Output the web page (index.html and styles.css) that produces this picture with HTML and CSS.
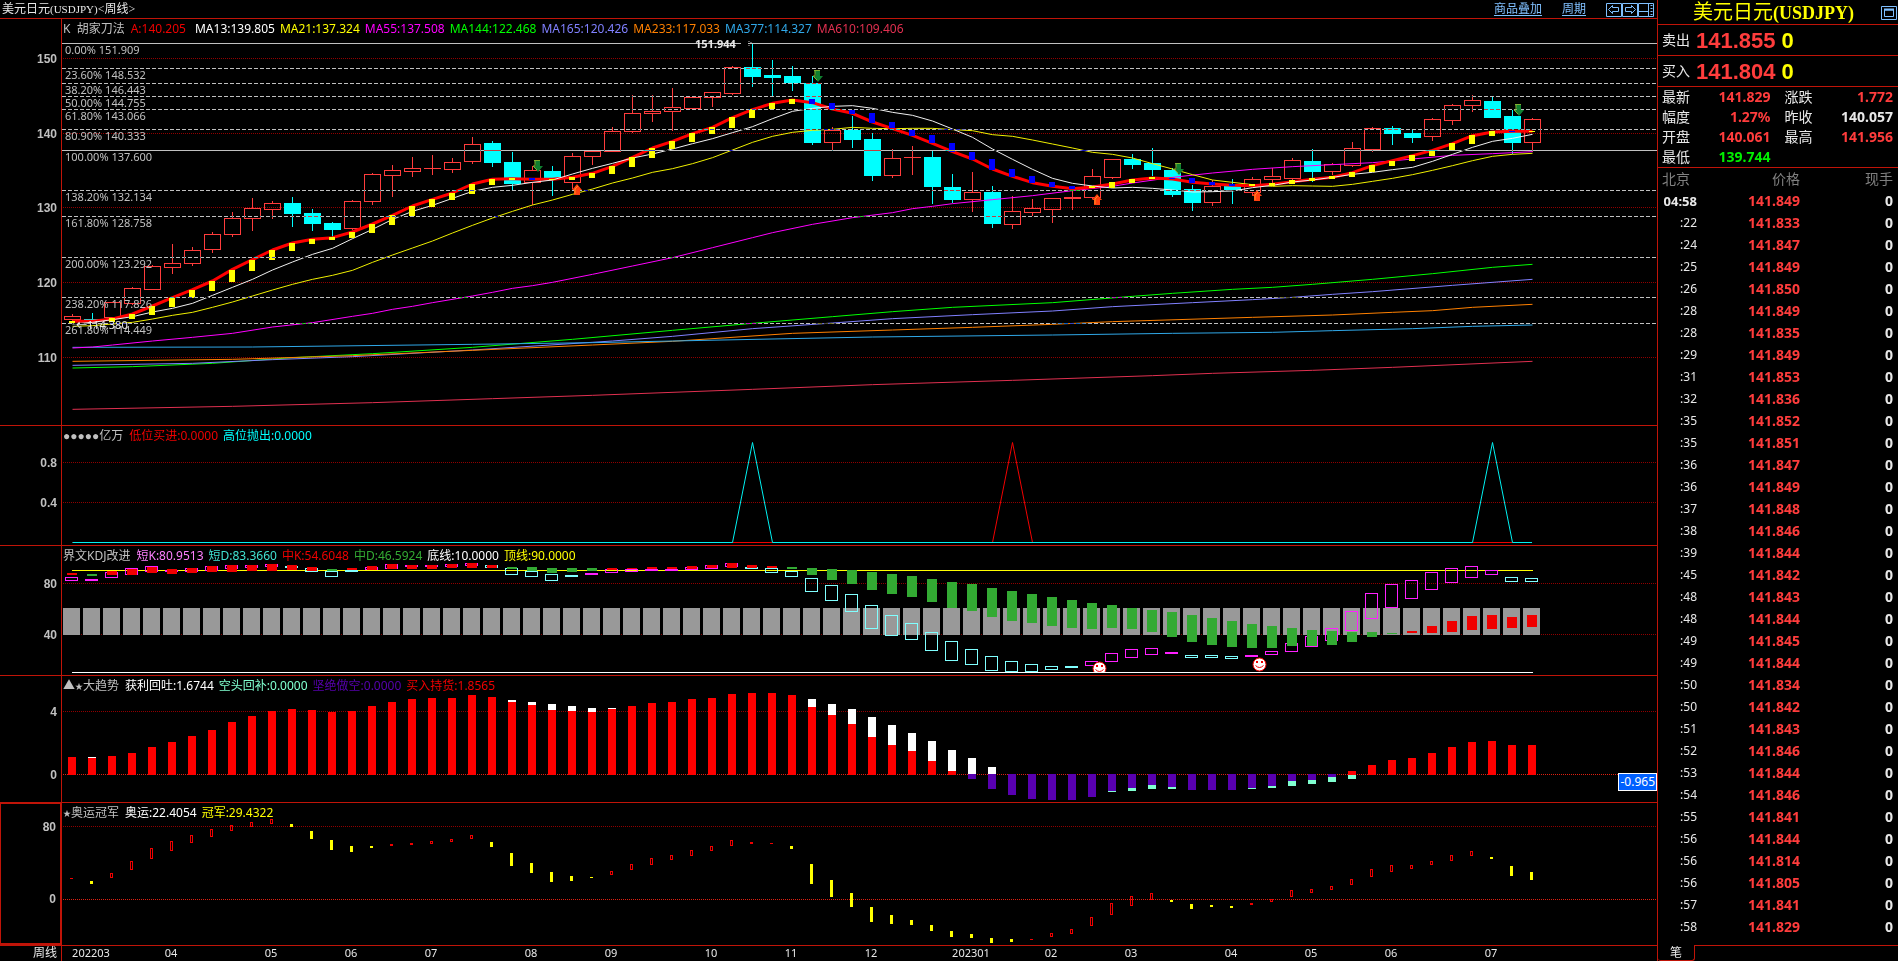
FILE: index.html
```html
<!DOCTYPE html>
<html lang="zh-CN">
<head>
<meta charset="UTF-8">
<meta name="viewport" content="width=device-width, initial-scale=1.0">
<title>美元日元(USDJPY)</title>
<link rel="stylesheet" href="styles.css">
</head>
<body>
<main class="charts">
  <header class="topbar">
    <h1>美元日元<span>(USDJPY)</span>&lt;周线&gt;</h1>
    <nav class="tools">
      <a href="#overlay">商品叠加</a>
      <a href="#period">周期</a>
      <div class="tool-buttons">
        <button type="button" aria-label="后退"><svg width="16" height="15" viewBox="0 0 16 15"><path d="M.5 1.5h15v13h-15z"/><path d="M2.5 7.5l4-4v2h6v4h-6v2z"/></svg></button>
        <button type="button" aria-label="前进"><svg width="16" height="15" viewBox="0 0 16 15"><path d="M.5 1.5h15v13h-15z"/><path d="M13.500 7.500l-4-4v2h-6v4h6v2z"/></svg></button>
        <button type="button" aria-label="布局"><svg width="17" height="15" viewBox="0 0 17 15"><path d="M.5 1.500h15v13h-15zM.5 9.500h10M10.500 1.500v13"/><path d="M13.500 3v10" stroke-width="2" stroke-dasharray="1 2"/></svg></button>
      </div>
    </nav>
  </header>

  <section class="panel price">
    <div class="axis" id="axis-price"></div>
    <div class="plot">
      <svg id="price" viewBox="62 19 1595 406" preserveAspectRatio="none"></svg>
      <p class="legend">
        <b>K&nbsp; 胡家刀法</b>
        <span class="red">A:140.205</span>
        <span class="white ma13">MA13:139.805</span>
        <span class="yellow">MA21:137.324</span>
        <span class="magenta">MA55:137.508</span>
        <span class="green">MA144:122.468</span>
        <span class="violet">MA165:120.426</span>
        <span class="orange">MA233:117.033</span>
        <span class="sky">MA377:114.327</span>
        <span class="crimson">MA610:109.406</span>
      </p>
    </div>
  </section>

  <section class="panel signal">
    <div class="axis" id="axis-signal"></div>
    <div class="plot">
      <svg id="signal" viewBox="62 426 1595 119" preserveAspectRatio="none"></svg>
      <p class="legend">
        <b><i>●●●●●</i>亿万</b>
        <span class="red">低位买进:0.0000</span>
        <span class="cyan">高位抛出:0.0000</span>
      </p>
    </div>
  </section>

  <section class="panel kdj">
    <div class="axis" id="axis-kdj"></div>
    <div class="plot">
      <svg id="kdj" viewBox="62 546 1595 129" preserveAspectRatio="none"></svg>
      <p class="legend">
        <b>界文KDJ改进</b>
        <span class="pink">短K:80.9513</span>
        <span class="teal">短D:83.3660</span>
        <span class="red">中K:54.6048</span>
        <span class="leaf">中D:46.5924</span>
        <span class="white">底线:10.0000</span>
        <span class="yellow">顶线:90.0000</span>
      </p>
    </div>
  </section>

  <section class="panel trend">
    <div class="axis" id="axis-trend"></div>
    <div class="plot">
      <svg id="trend" viewBox="62 676 1595 126" preserveAspectRatio="none"></svg>
      <p class="legend">
        <b>▲<i class="star">★</i>大趋势</b>
        <span class="white">获利回吐:1.6744</span>
        <span class="mint">空头回补:0.0000</span>
        <span class="purple">坚绝做空:0.0000</span>
        <span class="red">买入持货:1.8565</span>
      </p>
      <span class="cursor-value">-0.965</span>
    </div>
  </section>

  <section class="panel champion selected">
    <div class="axis" id="axis-champion"></div>
    <div class="plot">
      <svg id="champion" viewBox="62 803 1595 142" preserveAspectRatio="none"></svg>
      <p class="legend">
        <b><i class="star">★</i>奥运冠军</b>
        <span class="white">奥运:22.4054</span>
        <span class="yellow">冠军:29.4322</span>
      </p>
    </div>
  </section>

  <footer class="dates">
    <span class="cycle">周线</span>
    <div class="months" id="months"></div>
  </footer>
</main>

<aside class="quote">
  <header class="quote-title">
    <h2>美元日元<span>(USDJPY)</span></h2>
    <button type="button" aria-label="最大化"><svg width="16" height="14" viewBox="0 0 16 14"><path d="M.5 .5h15v13h-15z"/><path d="M3.500 4h9v6.500h-9z"/><path d="M3 3.500h10" stroke-width="2"/></svg></button>
  </header>
  <p class="deal">卖出 <strong>141.855</strong> <em>0</em></p>
  <p class="deal">买入 <strong>141.804</strong> <em>0</em></p>
  <dl class="stats">
    <dt>最新</dt><dd class="up">141.829</dd><dt>涨跌</dt><dd class="up">1.772</dd>
    <dt>幅度</dt><dd class="up">1.27%</dd><dt>昨收</dt><dd>140.057</dd>
    <dt>开盘</dt><dd class="up">140.061</dd><dt>最高</dt><dd class="up">141.956</dd>
    <dt>最低</dt><dd class="down">139.744</dd>
  </dl>
  <table class="ticks">
    <thead>
      <tr><th>北京</th><th>价格</th><th>现手</th></tr>
    </thead>
    <tbody id="ticks"></tbody>
  </table>
  <div class="tabs"><button type="button">笔</button></div>
</aside>
<script src="chart.js"></script>
</body>
</html>
```

FILE: styles.css
```css
* {
  box-sizing: border-box;
}
body {
  display: flex;
  height: 100vh;
  margin: 0;
  overflow: hidden;
  background: #000;
  color: #e8e8e8;
  font-family: "Noto Sans", "Noto Sans CJK SC", sans-serif;
  font-size: 12px;
}
h1, h2, p, dl, dd {
  margin: 0;
  font-weight: normal;
}
button {
  display: block;
  padding: 0;
  border: 0;
  background: none;
  color: inherit;
  font: inherit;
}
button svg {
  display: block;
  fill: none;
  stroke: #80c0ff;
}

/* left side */
.charts {
  flex: 1;
  display: flex;
  flex-direction: column;
  min-width: 0;
  border-right: 1px solid #c01408;
}
.topbar {
  display: flex;
  justify-content: space-between;
  height: 18px;
  padding: 0 2px;
  line-height: 18px;
}
.topbar h1 {
  font-family: "Liberation Serif", "Noto Sans CJK SC", serif;
  font-size: 12px;
}
.topbar h1 span {
  font-size: 11px;
}
.tools {
  display: flex;
  gap: 20px;
}
.tools a {
  color: #80c0ff;
  text-underline-offset: 2px;
}
.tool-buttons {
  display: flex;
}
.panel {
  display: flex;
  min-height: 0;
  border-top: 1px solid #c01408;
}
.price { flex: 406 0 0; }
.signal { flex: 119 0 0; }
.kdj { flex: 129 0 0; }
.trend { flex: 126 0 0; }
.champion { flex: 142 0 0; }

.axis {
  position: relative;
  width: 62px;
  border-right: 1px solid #c01408;
  color: #c0c0c0;
  font: bold 12px "Liberation Sans", sans-serif;
}
.selected .axis {
  border: 2px solid #c01408;
  border-width: 1px 2px 2px 1px;
}
.axis span {
  position: absolute;
  right: 4px;
  line-height: 16px;
  margin-top: -8px;
}
.plot {
  position: relative;
  flex: 1;
  min-width: 0;
}
.plot svg {
  display: block;
  width: 100%;
  height: 100%;
}
.legend {
  position: absolute;
  top: 0;
  left: 1px;
  display: flex;
  gap: 5px;
  line-height: 20px;
  white-space: nowrap;
}
.legend b {
  margin-right: 1px;
  color: #c0c0c0;
  font-weight: normal;
}
.legend i {
  font-family: "Liberation Sans", sans-serif;
  font-style: normal;
}
.legend .star {
  font-size: 8px;
  vertical-align: 1px;
}
.legend .ma13 {
  margin-left: 4px;
}
.red { color: #f00000; }
.white { color: #fff; }
.yellow { color: #ff0; }
.magenta { color: #f0f; }
.green { color: #0f0; }
.violet { color: #8080ff; }
.orange { color: #ff8000; }
.sky { color: #30a8e8; }
.crimson { color: #e03050; }
.cyan { color: #0ff; }
.pink { color: #ff80ff; }
.teal { color: #40e0d0; }
.leaf { color: #33aa33; }
.mint { color: #80ffd0; }
.purple { color: #5800b0; }

.level, .peak {
  position: absolute;
  left: 3px;
  margin-top: 7px;
  transform: translateY(-50%);
  color: #c0c0c0;
  font-size: 11px;
  line-height: 12px;
  white-space: nowrap;
}
.peak {
  margin-top: 0;
  color: #e8e8e8;
  font-weight: bold;
}
.peak.low {
  font-weight: normal;
}
.cursor-value {
  position: absolute;
  top: 77%;
  right: 0;
  padding: 0 1px;
  border: 1px solid #fff;
  background: #0060ff;
  color: #fff;
  line-height: 16px;
}
.dates {
  display: flex;
  height: 16px;
  border-top: 1px solid #c01408;
  line-height: 14px;
}
.cycle {
  width: 62px;
  padding-right: 4px;
  border-right: 1px solid #c01408;
  text-align: right;
}
.months {
  position: relative;
  flex: 1;
  font-size: 11px;
}
.months span {
  position: absolute;
  transform: translateX(-50%);
}

/* right side */
.quote {
  display: flex;
  flex-direction: column;
  width: 240px;
  font-size: 14px;
}
.quote-title {
  display: flex;
  height: 25px;
  padding: 1px 1px 0 35px;
  border-bottom: 1px solid #c01408;
  line-height: 23px;
}
.quote-title h2 {
  flex: 1;
  color: #ff0;
  font-family: "Liberation Serif", "Noto Sans CJK SC", serif;
  font-size: 20px;
}
.quote-title h2 span {
  font-size: 18px;
  font-weight: bold;
}
.deal {
  display: flex;
  gap: 6px;
  height: 31px;
  padding-left: 4px;
  border-bottom: 1px solid #c01408;
  line-height: 30px;
}
.deal strong, .deal em {
  color: #ff3c3c;
  font: bold 22px/32px "Liberation Sans", sans-serif;
}
.deal em {
  color: #ff0;
}
.stats {
  display: grid;
  grid-template-columns: 28px 1fr 42px 1fr;
  padding: 0 5px 0 4px;
  border-bottom: 1px solid #c01408;
  line-height: 20px;
}
.stats dt:nth-of-type(even) {
  padding-left: 14px;
}
.stats dd {
  font-weight: bold;
  text-align: right;
}
.stats .up, .ticks td:nth-child(2) {
  color: #ff3c3c;
}
.stats .down {
  color: #00f000;
}
.ticks {
  width: 100%;
  border-spacing: 0;
  table-layout: fixed;
  line-height: 22px;
}
.ticks th {
  height: 22px;
  padding: 0;
  color: #808080;
  font-weight: normal;
  text-align: right;
}
.ticks th:first-child {
  width: 42px;
  padding-left: 4px;
  text-align: left;
}
.ticks th:nth-child(2) {
  width: 100px;
}
.ticks th:last-child, .ticks td:last-child {
  padding-right: 5px;
}
.ticks td {
  height: 22px;
  padding: 0;
  font-weight: bold;
  text-align: right;
}
.ticks td:first-child {
  padding-right: 3px;
  font-size: 12px;
  font-weight: normal;
}
.ticks tr:first-child td:first-child {
  font-size: 13px;
  font-weight: bold;
}
.tabs {
  display: flex;
  height: 16px;
  margin-top: auto;
}
.tabs button {
  width: 37px;
  border: 1px solid #c01408;
  border-width: 0 1px 1px 0;
  border-radius: 0 0 3px 3px;
  font-size: 12px;
  line-height: 14px;
}
.tabs::after {
  content: "";
  flex: 1;
  border-top: 1px solid #c01408;
}
```

FILE: chart.js
```js
const STEP = 20;
const FIRST = 72;
const LEFT = 62;
const WIDTH = 1595;
const COUNT = 74;
const NS = 'http://www.w3.org/2000/svg';

const cx = i => FIRST + i * STEP;
// price values are kept in thirds of a unit, the lower panels in their own grid
const py = v => Math.round(v / 3);
const ly = v => Math.round(420 + v / 2.898);

function add(svg, tag, attrs) {
  const el = document.createElementNS(NS, tag);
  for (const key in attrs) el.setAttribute(key, attrs[key]);
  svg.appendChild(el);
  return el;
}

function fill(svg, x, top, w, bottom, color) {
  add(svg, 'rect', { x, y: top, width: w, height: Math.max(1, bottom - top), fill: color, 'shape-rendering': 'crispEdges' });
}

function box(svg, x, top, w, bottom, color) {
  if (bottom - top < 3) {
    fill(svg, x, top, w, bottom, color);
    return;
  }
  add(svg, 'rect', { x: x + 0.5, y: top + 0.5, width: w - 1, height: bottom - top - 1, fill: 'none', stroke: color, 'shape-rendering': 'crispEdges' });
}

function line(svg, y, color, dash, x1 = LEFT, x2 = LEFT + WIDTH) {
  return add(svg, 'line', { x1, y1: y + 0.5, x2, y2: y + 0.5, stroke: color, 'stroke-dasharray': dash || 'none', 'shape-rendering': 'crispEdges' });
}

function curve(svg, points, color, width = 1) {
  add(svg, 'polyline', {
    points: points.map(p => `${cx(p[0]) + 0.5},${p[1] / 3}`).join(' '),
    fill: 'none', stroke: color, 'stroke-width': width, 'stroke-linejoin': 'round'
  });
}

function label(parent, text, y, top, height, cls = '') {
  const span = document.createElement('span');
  span.textContent = text;
  span.className = cls;
  span.style.top = (y - top) / height * 100 + '%';
  parent.appendChild(span);
  return span;
}

function series(text) {
  return text.trim().split(/\s+/).map(item => item.split(',').map(v => isNaN(v) ? v : Number(v)));
}

function axis(id, svg, top, height, marks, color = '#900000') {
  marks.forEach(([text, y]) => {
    label(document.getElementById(id), text, y + 1, top, height);
    line(svg, y, text === '0' ? '#e02010' : color, '1 1', LEFT + 1);
  });
}

/* ---- price ---- */
const price = document.getElementById('price');
axis('axis-price', price, 19, 406, [['150', 58], ['140', 133], ['130', 207], ['120', 282], ['110', 357]]);

// body top, body bottom, high, low
const candles = series(`
r,949,959,942,964 c,957,960,939,962 r,907,955,905,965 r,865,911,861,914 r,799,869,796,869
r,790,803,732,822 r,751,791,741,797 r,703,751,696,759 r,655,706,636,711 r,625,656,594,693
r,610,629,603,657 c,610,641,591,681 c,639,671,627,693 c,669,689,665,710 r,604,688,600,690
r,523,605,519,614 r,511,527,495,591 r,505,515,471,531 r,505,507,465,525 r,487,509,474,518
r,433,487,411,491 c,429,488,423,501 c,486,551,456,571 r,511,550,497,616 c,514,540,498,587
r,469,548,459,568 r,454,470,452,495 r,394,455,381,455 r,340,395,285,399 r,334,341,285,366
r,322,335,264,393 r,292,326,290,328 r,277,293,275,321 r,202,281,198,285 c,201,231,132,262
c,225,234,180,288 c,228,250,198,273 c,249,429,228,435 r,391,428,381,452 c,389,419,348,444
c,417,528,399,543 r,475,527,447,534 r,472,475,438,525 c,471,561,452,612 c,561,599,522,609
r,577,599,516,636 c,576,671,558,684 r,634,674,588,687 r,625,638,597,648 r,595,629,593,669
r,592,598,572,630 r,529,593,507,596 r,478,533,477,537 c,477,495,461,507 c,489,510,444,528
c,510,585,505,591 c,567,609,555,633 r,559,608,540,618 c,558,571,537,612 r,538,578,531,588
r,529,540,505,548 r,481,536,474,540 c,483,516,447,546 r,493,515,490,525 r,445,497,426,501
r,385,449,381,456 c,384,402,378,435 c,399,414,390,429 r,358,412,354,423 r,316,362,312,375
r,301,318,285,336 c,303,354,291,354 c,348,429,330,462 r,358,428,354,456`);

candles.forEach(([kind, top, bottom, high, low], i) => {
  const color = kind === 'r' ? '#ff3c3c' : '#00ffff';
  const x = cx(i);
  if (kind === 'r') {
    if (py(top) > py(high)) fill(price, x, py(high), 1, py(top), color);
    if (py(low) > py(bottom)) fill(price, x, py(bottom), 1, py(low), color);
    box(price, x - 8, py(top), 17, py(bottom), color);
  } else {
    fill(price, x, py(high), 1, py(low), color);
    fill(price, x - 8, py(top), 17, py(bottom), color);
  }
});

const knife = [964, 964, 957, 942, 918, 893, 869, 843, 808, 779, 750, 729, 718, 713, 696, 672, 646, 618, 598, 579,
  552, 538, 536, 538, 538, 532, 520, 499, 472, 444, 424, 401, 382, 353, 329, 310, 300, 308, 327, 340,
  366, 386, 406, 430, 455, 477, 507, 529, 548, 559, 566, 561, 552, 540, 534, 537, 547, 552, 556, 557,
  553, 545, 538, 532, 518, 497, 482, 467, 451, 431, 407, 396, 394, 394];
const ma13 = [972, 967, 959, 950, 936, 925, 910, 886, 862, 838, 810, 786, 763, 745, 716, 688, 658, 634, 616, 595,
  574, 562, 556, 547, 540, 522, 505, 490, 474, 462, 447, 431, 416, 398, 380, 356, 334, 325, 319, 317,
  325, 337, 346, 363, 387, 412, 447, 478, 508, 535, 550, 558, 564, 562, 565, 570, 576, 575, 573, 563,
  556, 546, 540, 532, 523, 517, 509, 502, 484, 463, 442, 424, 415, 403];
const ma21 = [979, 977, 972, 967, 957, 946, 937, 922, 906, 888, 870, 853, 838, 826, 811, 787, 765, 744, 723, 699,
  676, 654, 634, 615, 600, 583, 567, 549, 534, 517, 506, 491, 473, 450, 427, 409, 397, 391, 388, 382,
  385, 386, 385, 385, 389, 392, 404, 409, 420, 432, 444, 457, 463, 474, 491, 507, 524, 540, 547, 554,
  559, 557, 558, 559, 553, 544, 535, 524, 511, 497, 482, 469, 463, 460];

curve(price, series('0,1104 3,1100 7,1090 11,1073 15,1061 20,1042 25,1018 30,991 34,970 38,950 41,935 44,922 49,908 53,889 55,880 58,868 60,862 62,853 65,838 68,821 71,802 73,793'), '#00ff00');
curve(price, series('0,1096 6,1090 10,1079 14,1070 20,1050 27,1023 30,1009 34,986 38,969 41,956 45,944 49,933 52,920 56,908 59,899 61,892 63,883 65,875 69,856 73,838'), '#8080ff');
curve(price, series('0,1084 8,1078 14,1067 20,1051 26,1035 30,1024 36,1000 41,990 45,982 49,973 52,965 59,952 63,945 66,937 68,932 70,922 73,913'), '#ff8000');
curve(price, series('0,1042 9,1041 20,1033 26,1028 30,1023 40,1011 49,1005 55,1000 60,997 63,992 67,986 70,979 73,975'), '#30a8e8');
curve(price, series('0,1228 8,1219 15,1208 21,1196 26,1186 34,1168 40,1154 47,1141 54,1127 57,1120 62,1111 66,1102 73,1084'), '#e03050');
curve(price, series('0,1044 1,1041 2,1035 4,1023 6,1012 8,1000 10,981 12,968 14,949 15,940 16,928 17,919 18,908 20,888 21,877 22,865 23,857 24,847 26,823 28,798 30,773 32,743 34,713 35,698 37,673 39,653 41,638 42,626 43,619 44,611 46,599 48,587 50,572 52,559 53,549 55,532 57,519 59,508 61,500 63,494 65,488 67,477 69,466 71,461 73,455'), '#ff00ff');
curve(price, ma21.map((v, i) => [i, v]), '#f0f000');
curve(price, knife.map((v, i) => [i, v]), '#ff0000', 3);
curve(price, ma13.map((v, i) => [i, v]), '#f0f0f0');

const blades = series(`
0,962,970,y 2,954,966,y 3,942,956,y 4,918,944,y 5,894,920,y 6,870,895,y 7,843,872,y 8,810,846,y 9,780,812,y
10,750,781,y 11,729,752,y 12,717,731,y 13,711,719,y 14,696,714,y 15,672,698,y 16,645,674,y 17,618,647,y
18,597,620,y 19,579,599,y 20,552,581,y 21,537,554,y 22,534,540,y 23,534,540,b 24,537,539,y 25,531,539,y
26,519,533,y 27,498,521,y 28,471,500,y 29,444,473,y 30,423,446,y 31,399,425,y 32,381,402,y 33,351,383,y
34,328,353,y 35,309,328,y 36,296,311,y 37,297,311,b 38,309,328,b 39,329,341,b 40,340,368,b 41,366,384,b
42,389,407,b 43,406,430,b 44,430,455,b 45,456,479,b 46,477,509,b 47,507,530,b 48,528,549,b 49,546,562,b
50,558,567,b 51,559,564,y 52,547,564,y 53,537,550,y 54,531,537,y 55,533,537,b 56,534,549,b 57,546,555,b
58,551,557,b 59,552,557,y 60,549,557,y 61,541,551,y 62,534,543,y 63,528,537,y 64,516,530,y 65,495,517,y
66,483,498,y 67,465,483,y 68,453,468,y 69,429,449,y 70,405,431,y 71,393,408,y 72,393,395,b 73,393,395,y`);
blades.forEach(([i, top, bottom, kind]) => {
  fill(price, cx(i) - 3, py(top), 6, py(bottom), kind === 'y' ? '#ffff00' : '#0000ff');
});

// retracement levels
const levels = [
  ['0.00% 151.909', 43], ['23.60% 148.532', 68], ['38.20% 146.443', 83], ['50.00% 144.755', 96],
  ['61.80% 143.066', 109], ['80.90% 140.333', 129], ['100.00% 137.600', 150], ['138.20% 132.134', 190],
  ['161.80% 128.758', 216], ['200.00% 123.292', 257], ['238.20% 117.826', 297], ['261.80% 114.449', 323]
];
levels.forEach(([text, y]) => {
  const solid = y === 43 || y === 150;
  const l = line(price, y, '#c0c0c0', solid ? '' : '4 2');
  l.style.mixBlendMode = 'difference';
  label(price.parentNode, text, y, 19, 406, 'level');
});
fill(price, 741, 43, 7, 44, '#000');
add(price, 'path', { d: 'M749 41v1M750 43h2M749 45v1', stroke: '#c0c0c0' });
label(price.parentNode, '151.944', 44, 19, 406, 'peak').style.left = (695 - LEFT) / WIDTH * 100 + '%';
label(price.parentNode, '←114.380', 325, 19, 406, 'peak low').style.left = (76 - LEFT) / WIDTH * 100 + '%';

[[537, 160], [817, 70], [1178, 163], [1518, 104]].forEach(([x, y]) => {
  add(price, 'path', { d: `M${x - 3} ${y}h6v6h3l-5 6l-5-6h3z`, fill: '#108030' });
  add(price, 'path', { d: `M${x - 3} ${y + 0.5}h6M${x - 2} ${y}v6h-2l4 4`, fill: 'none', stroke: '#80b030' });
});
[[577, 184], [1097, 194], [1257, 190]].forEach(([x, y]) => {
  add(price, 'path', { d: `M${x - 3} ${y + 11}v-5h-2l5-6l5 6h-2v5z`, fill: '#ff4010' });
  add(price, 'path', { d: `M${x - 2} ${y + 10}v-5l3-3`, fill: 'none', stroke: '#ff9020' });
});

/* ---- signal ---- */
const signal = document.getElementById('signal');
axis('axis-signal', signal, 426, 119, [['0.8', 462], ['0.4', 502]]);

function spikes(peaks, color) {
  let d = 'M72.5 542.5';
  peaks.forEach(i => {
    d += `H${cx(i - 1) + 0.5}L${cx(i) + 0.5} 442.5L${cx(i + 1) + 0.5} 542.5`;
  });
  add(signal, 'path', { d: d + 'H1532', fill: 'none', stroke: color });
}
spikes([47], '#f00000');
spikes([34, 71], '#00f0f0');

/* ---- kdj ---- */
const kdj = document.getElementById('kdj');
axis('axis-kdj', kdj, 546, 129, [['80', 583], ['40', 634]]);
for (let i = 0; i < COUNT; i++) fill(kdj, cx(i) - 9, 608, 17, 635, '#999999');
line(kdj, 570, '#ffff00', '', 72, 1533);
line(kdj, 672, '#ffffff', '', 72, 1533);

const short = series(`
455,467,m 461,467,m 441,458,m 429,449,m 423,441,m 435,441,m 429,441,m 423,438,m 420,432,m 420,430,m
417,427,m 423,429,c 429,440,c 438,455,c 435,441,c 426,435,m 417,431,m 420,426,m 420,426,m 417,426,m
414,424,m 420,429,c 429,449,c 438,455,c 446,467,c 449,455,c 443,449,m 432,443,m 432,441,m 432,438,m
432,438,m 426,435,m 420,432,m 414,426,m 426,432,c 429,443,c 438,455,c 458,499,c 478,525,c 504,556,c
536,606,c 565,627,c 588,638,c 614,670,c 641,698,c 664,710,c 684,727,c 698,730,c 707,730,c 713,725,c
713,719,c 698,713,m 675,701,m 664,690,m 661,681,m 672,678,m 681,690,c 681,690,c 684,693,c 681,687,m
669,681,m 646,672,m 626,658,m 603,641,m 554,612,m 501,577,m 475,545,m 464,519,m 441,493,m 429,472,m
423,458,m 435,449,m 455,470,c 458,470,c`);
const middle = series(`
443,449,r 446,452,g 438,449,r 432,449,r 426,444,r 432,446,r 429,443,r 423,441,r 420,441,r 420,438,r
417,438,r 420,435,r 426,438,r 432,438,g 429,436,r 423,435,r 418,432,r 420,432,r 420,432,r 417,429,r
414,429,r 420,429,r 426,432,g 426,438,g 429,443,g 429,441,g 429,438,g 429,434,r 429,433,r 426,432,r
426,432,r 423,432,r 420,430,r 414,429,r 420,429,r 423,430,r 426,432,g 429,449,g 432,464,g 435,475,g
441,493,g 446,504,g 452,513,g 461,527,g 470,545,g 475,554,g 487,571,g 496,583,g 504,588,g 513,597,g
522,603,g 530,606,g 536,603,g 545,606,g 551,614,g 556,629,g 565,643,g 574,652,g 583,658,g 591,661,g
597,661,g 603,655,g 609,655,g 612,652,g 614,643,g 614,629,g 617,620,g 612,617,r 597,617,r 583,614,r
568,609,r 565,606,r 571,603,r 565,600,r`);
short.forEach(([top, bottom, kind], i) => {
  box(kdj, cx(i) - 7, ly(top), 13, ly(bottom), kind === 'm' ? '#ff20ff' : '#80ffff');
});
middle.forEach(([top, bottom, kind], i) => {
  fill(kdj, cx(i) - 5, ly(top), 10, ly(bottom), kind === 'r' ? '#f00000' : '#33aa33');
});
[[1099, 668], [1259, 664]].forEach(([x, y]) => {
  add(kdj, 'circle', { cx: x + 0.5, cy: y + 0.5, r: 6.5, fill: '#fff', stroke: '#f00000' });
  add(kdj, 'path', { d: `M${x - 3} ${y - 3}h2v2h-2zM${x + 2} ${y - 3}h2v2h-2z`, fill: '#f00000' });
  add(kdj, 'path', { d: `M${x - 3.5} ${y + 1.5}q4 4 8 0`, fill: 'none', stroke: '#f00000' });
});
fill(kdj, 1090, 672, 20, 673, '#fff');
fill(kdj, 1090, 673, 20, 675, '#000');

/* ---- trend ---- */
const trend = document.getElementById('trend');
axis('axis-trend', trend, 676, 126, [['4', 711], ['0', 774]]);
const RED = '#ff0000', WHITE = '#ffffff', PURPLE = '#5800b0', MINT = '#80ffd0';

const held = [977, 980, 974, 965, 948, 933, 916, 898, 875, 858, 843, 838, 841, 846, 843, 829, 817, 809, 806, 806,
  797, 803, 817, 826, 841, 843, 846, 838, 829, 820, 817, 809, 806, 794, 791, 791, 797, 832, 855, 881,
  919, 942, 959, 988, 1017];
held.forEach((top, i) => fill(trend, cx(i) - 4, ly(top), 8, 775, RED));
[1017, 1000, 985, 980, 965, 948, 933, 930, 942, 942].forEach((top, i) => fill(trend, cx(64 + i) - 4, ly(top), 8, 775, RED));

series(`1,977,980 22,812,817 23,817,826 24,823,841 25,829,843 26,835,846 27,835,838 37,809,832 38,823,855
39,838,881 40,861,919 41,884,942 42,907,959 43,930,988 44,956,1017 45,980,1026 46,1006,1026`)
  .forEach(([i, top, bottom]) => fill(trend, cx(i) - 4, ly(top), 8, ly(bottom), WHITE));

[1041, 1069, 1087, 1098, 1101, 1101, 1093, 1075, 1067, 1058, 1064, 1072, 1072, 1072, 1067, 1061, 1046, 1043, 1035]
  .forEach((bottom, i) => fill(trend, cx(45 + i) - 4, 774, 8, ly(bottom), PURPLE));

series('52,1075,1078 53,1067,1075 54,1058,1069 55,1064,1069 59,1067,1069 60,1061,1067 61,1046,1061 62,1043,1055 63,1035,1049 64,1029,1041')
  .forEach(([i, top, bottom]) => fill(trend, cx(i) - 4, ly(top), 8, ly(bottom), MINT));

/* ---- champion ---- */
const champion = document.getElementById('champion');
axis('axis-champion', champion, 803, 142, [['80', 826], ['0', 899]]);
series(`
1327,1330,r 1336,1345,y 1313,1327,r 1278,1304,r 1240,1272,r 1220,1249,r 1203,1226,r 1185,1209,r 1174,1191,r
1165,1180,r 1156,1171,r 1171,1180,y 1191,1214,y 1217,1246,y 1235,1252,y 1235,1240,y 1229,1235,r 1226,1232,r
1220,1229,r 1214,1223,r 1203,1214,r 1223,1238,y 1255,1293,y 1284,1313,y 1310,1339,y 1322,1336,y 1325,1327,y
1307,1319,r 1287,1304,r 1269,1290,r 1261,1275,r 1246,1264,r 1235,1249,r 1217,1235,r 1223,1229,r 1226,1229,r
1235,1243,y 1287,1345,y 1333,1383,y 1371,1411,y 1411,1455,y 1435,1461,y 1449,1464,y 1464,1481,y 1481,1498,y
1490,1501,y 1501,1516,y 1504,1513,y 1504,1507,r 1487,1498,r 1475,1490,r 1440,1467,r 1400,1435,r 1380,1409,r
1371,1391,r 1391,1397,y 1403,1417,y 1406,1411,y 1409,1414,y 1400,1406,r 1388,1397,r 1362,1383,r 1359,1371,r
1351,1362,r 1330,1348,r 1301,1325,r 1290,1310,r 1290,1301,r 1278,1290,r 1261,1278,r 1249,1264,r 1267,1272,y
1293,1322,y 1310,1333,y`).forEach(([top, bottom, kind], i) => {
  const draw = kind === 'r' ? box : fill;
  draw(champion, cx(i) - 2, ly(top), 3, ly(bottom), kind === 'r' ? '#f00000' : '#ffff00');
});

/* ---- dates ---- */
[['202203', 91], ['04', 171], ['05', 271], ['06', 351], ['07', 431], ['08', 531], ['09', 611], ['10', 711], ['11', 791],
  ['12', 871], ['202301', 971], ['02', 1051], ['03', 1131], ['04', 1231], ['05', 1311], ['06', 1391], ['07', 1491]
].forEach(([text, x]) => {
  const span = document.createElement('span');
  span.textContent = text;
  span.style.left = (x - LEFT) / WIDTH * 100 + '%';
  document.getElementById('months').appendChild(span);
});

/* ---- ticks ---- */
const times = '04:58 :22 :24 :25 :26 :28 :28 :29 :31 :32 :35 :35 :36 :36 :37 :38 :39 :45 :48 :48 :49 :49 :50 :50 :51 :52 :53 :54 :55 :56 :56 :56 :57 :58'.split(' ');
const prices = [849, 833, 847, 849, 850, 849, 835, 849, 853, 836, 852, 851, 847, 849, 848, 846, 844, 842, 843, 844,
  845, 844, 834, 842, 843, 846, 844, 846, 841, 844, 814, 805, 841, 829];
document.getElementById('ticks').innerHTML = times.map((time, i) =>
  `<tr><td>${time}</td><td>141.${prices[i]}</td><td>0</td></tr>`).join('');
```
